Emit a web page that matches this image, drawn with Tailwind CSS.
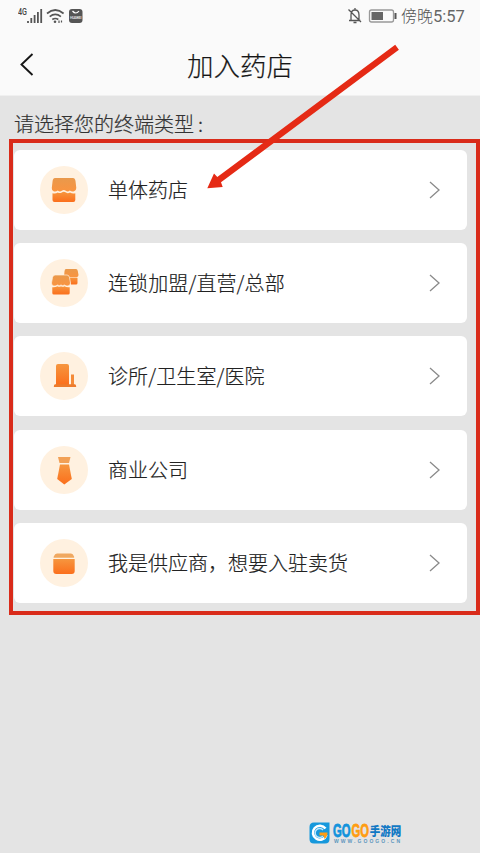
<!DOCTYPE html>
<html lang="zh-CN">
<head>
<meta charset="utf-8">
<title>加入药店</title>
<script src="https://cdn.jsdelivr.net/npm/@tailwindcss/browser@4"></script>
</head>
<body class="relative w-[480px] h-[853px] overflow-hidden bg-[#e4e4e4] font-['Noto_Sans_CJK_SC',sans-serif] font-light text-[#222]">
<svg width="0" height="0" class="absolute">
  <defs>
    <linearGradient id="or" x1="0" y1="0" x2="0" y2="1"><stop offset="0" stop-color="#f6963f"/><stop offset="1" stop-color="#fb6f1c"/></linearGradient>
    <linearGradient id="top" x1="0" y1="0" x2="0" y2="1"><stop offset="0" stop-color="#e9994c"/><stop offset="1" stop-color="#fa9440"/></linearGradient>
  </defs>
</svg>
<header class="h-[96px] bg-[#fafafa] border-b border-[#f0f0f0]">
  <div class="flex h-8 items-center justify-between pl-[18px] pr-[15px]">
    <svg width="68" height="20" viewBox="0 0 68 20" fill="none" stroke="#555">
      <text x="0" y="9" font-size="8.500" font-weight="500" font-family="Roboto, sans-serif" fill="#444" stroke="none" textLength="9" lengthAdjust="spacingAndGlyphs">4G</text>
      <path d="M10 15v2M13.300 12v5M16.600 9v8M19.900 6v11M23.200 3v14" stroke-width="1.800"/>
      <path d="M29 7.500q8.300-7 16.600 0M31.700 10.600q5.600-4.500 11.200 0M34.300 13.500q3-2 6 0" stroke-width="1.700"/>
      <circle cx="37" cy="15.700" r="1.300" fill="#555" stroke="none"/>
      <path d="M41 17v-2.500M43.500 14.500v2" stroke-width="1.200"/>
      <rect x="51" y="3" width="13.500" height="14" rx="3" fill="#555" stroke="none"/>
      <path d="M54.500 5q3.300 4 6.500 0" stroke="#fff" stroke-width="1.200"/>
      <text x="52" y="12.500" font-size="3.500" font-weight="700" font-family="Roboto, sans-serif" fill="#ddd" stroke="none" textLength="11.500">HUAWEI</text>
    </svg>
    <div class="flex items-center">
      <svg width="54" height="18" viewBox="0 0 54 18" fill="none" stroke="#555" stroke-width="1.300">
        <path d="M2 13.500h11.500M4 13V8q0-5 4-5t4 5v5M6.500 15.500h3M8 1v2M1.500 2.500l12.500 12.500"/>
        <rect x="22.500" y="3" width="24" height="12" rx="2" stroke="#999"/>
        <rect x="24.500" y="5" width="11.500" height="8" fill="#666" stroke="none"/>
        <path d="M48.500 6v6" stroke="#555" stroke-width="2"/>
      </svg>
      <span class="flex w-[64px] items-baseline whitespace-nowrap text-[16px] leading-5 text-[#555]"><span>傍晚</span><span class="font-['Roboto',sans-serif] text-[16.500px] font-normal text-[#666]">5:57</span></span>
    </div>
  </div>
  <div class="grid h-[65px] grid-cols-[60px_1fr_60px] items-center">
    <svg class="ml-[18px]" width="18" height="26" viewBox="0 0 18 26" fill="none" stroke="#161616" stroke-width="1.900"><path d="M14.500 2L3.500 12.500l11 10.500"/></svg>
    <h1 class="text-center text-[26.500px] leading-8 font-light text-[#161616] [-webkit-text-stroke:0.2px]">加入药店</h1>
  </div>
</header>
<main class="pl-[14px] pr-[13px]">
  <p class="flex h-[54px] items-center pt-px text-[20px] leading-6 text-[#333] [-webkit-text-stroke:0.2px]">请选择您的终端类型<span class="w-4 pl-1">:</span></p>
  <ul class="flex flex-col gap-[13.200px] text-[20px] [-webkit-text-stroke:0.2px]">
    <li class="flex h-20 items-center rounded-[6px] bg-white pl-[26px] pr-[27px]">
      <svg width="48" height="48" viewBox="0 0 48 48"><circle cx="24" cy="24" r="24" fill="#fff1e0"/>
        <path d="M15 12h18q2 0 2.500 3l.8 7q0 2.500-2.200 3.200-2.400.8-4.300-.8-2 1.800-4 .3-2-1.600-4 0-2 1.500-4-.3-2 1.600-4.200.800Q11.600 24.500 11.800 22l.8-7q.4-3 2.400-3z" fill="url(#top)"/>
        <path d="M12.500 27.200q3 .8 5.300-.8 2 1.300 4 0 2-1.200 4.200.2 2 1.200 4-.2 2.500 1.600 5.300.8V34q0 2-2 2H14.500q-2 0-2-2z" fill="url(#or)"/></svg>
      <span class="ml-5 flex-1">单体药店</span>
      <svg width="12" height="18" viewBox="0 0 12 18" fill="none" stroke="#8a8a8a" stroke-width="1.300"><path d="M2 1l9 8-9 8"/></svg>
    </li>
    <li class="flex h-20 items-center rounded-[6px] bg-white pl-[26px] pr-[27px]">
      <svg width="48" height="48" viewBox="0 0 48 48"><circle cx="24" cy="24" r="24" fill="#fff1e0"/>
        <path d="M26 10h10q1.500 0 1.800 2l.7 4q0 2-2 2.300H24l.5-6q.2-2.300 1.500-2.300z" fill="url(#top)"/>
        <path d="M29 18.800h8.500V24q0 1.500-1.500 1.500h-5z" fill="url(#or)"/>
        <path d="M15 16h12q2 0 2.500 2.500l1 5.500q0 2.600-2.500 3-2 .3-3.500-1-1.700 1.300-3.500 0-1.700 1.300-3.500 0-2 1.300-3.700 1Q11.300 26.500 11.500 24l1-5.500Q13 16 15 16z" fill="url(#top)" stroke="#fff1e0" stroke-width=".7"/>
        <path d="M12.300 28.200q2.700.4 5.200-1 1.800 1.200 3.500 0 1.800 1.200 3.500 0 2 1.400 5.200 1V34q0 1.500-1.500 1.500H13.800q-1.500 0-1.500-1.500z" fill="url(#or)"/></svg>
      <span class="ml-5 flex-1 tracking-[0.1px]">连锁加盟/直营/总部</span>
      <svg width="12" height="18" viewBox="0 0 12 18" fill="none" stroke="#8a8a8a" stroke-width="1.300"><path d="M2 1l9 8-9 8"/></svg>
    </li>
    <li class="flex h-20 items-center rounded-[6px] bg-white pl-[26px] pr-[27px]">
      <svg width="48" height="48" viewBox="0 0 48 48"><circle cx="24" cy="24" r="24" fill="#fff1e0"/>
        <path d="M18 12h9q2 0 2 2v19H16V14q0-2 2-2z" fill="url(#or)"/>
        <rect x="31" y="22.500" width="3" height="11" fill="#f48a38"/>
        <path d="M15 32.300h20q1.200 0 1.200 2.700H13.800q0-2.700 1.200-2.700z" fill="#ed7b2c"/></svg>
      <span class="ml-5 flex-1 tracking-[0.1px]">诊所/卫生室/医院</span>
      <svg width="12" height="18" viewBox="0 0 12 18" fill="none" stroke="#8a8a8a" stroke-width="1.300"><path d="M2 1l9 8-9 8"/></svg>
    </li>
    <li class="flex h-20 items-center rounded-[6px] bg-white pl-[26px] pr-[27px]">
      <svg width="48" height="48" viewBox="0 0 48 48"><circle cx="24" cy="24" r="24" fill="#fff1e0"/>
        <path d="M18 11h12.500L29 17h-9.500z" fill="#f2a055"/>
        <path d="M20 18.500h9l2.800 14.500-7.500 5.500L17.200 33z" fill="url(#or)"/></svg>
      <span class="ml-5 flex-1">商业公司</span>
      <svg width="12" height="18" viewBox="0 0 12 18" fill="none" stroke="#8a8a8a" stroke-width="1.300"><path d="M2 1l9 8-9 8"/></svg>
    </li>
    <li class="flex h-20 items-center rounded-[6px] bg-white pl-[26px] pr-[27px]">
      <svg width="48" height="48" viewBox="0 0 48 48"><circle cx="24" cy="24" r="24" fill="#fff1e0"/>
        <path d="M17 14.500h14q2 0 3 3l.2 1.300H13.500l.3-1.300q1-3 3.200-3z" fill="#f0a860"/>
        <path d="M13.300 20h21.400V32q0 3-3 3H16.300q-3 0-3-3z" fill="url(#or)"/></svg>
      <span class="ml-5 flex-1">我是供应商，想要入驻卖货</span>
      <svg width="12" height="18" viewBox="0 0 12 18" fill="none" stroke="#8a8a8a" stroke-width="1.300"><path d="M2 1l9 8-9 8"/></svg>
    </li>
  </ul>
</main>
<div class="absolute left-[9px] top-[139px] h-[476px] w-[471px] border-4 border-[#d92b1a]"></div>
<svg class="absolute left-0 top-0" width="480" height="200" viewBox="0 0 480 200"><path d="M395.200 44.800L398.900 49.700 221 182.300 222.700 187 207.300 188.200 214 173.500 217.300 177z" fill="#e52a15"/></svg>
<div class="absolute left-[309px] top-[822px] flex items-start">
  <svg width="21" height="22" viewBox="0 0 21 22"><path d="M5 .5h15.500V17q0 4.500-4.500 4.500H5Q.5 21.500.5 17V5Q.5.500 5 .500z" fill="#1698dc"/><path d="M16.500 6.500A7 7 0 1 0 17.500 13" fill="none" stroke="#fff" stroke-width="2.500"/><path d="M14 8A4.500 4.500 0 1 0 14 14" fill="none" stroke="#bde8ff" stroke-width="1.500"/><path d="M10.500 10.500h8q0 4-3 6.500l-1-3.500h-4z" fill="#ff9d12"/></svg>
  <svg class="ml-[3px] overflow-visible" width="70" height="22" viewBox="0 0 70 22" font-family="'Liberation Sans',sans-serif" font-weight="700">
    <text x="0" y="15" font-size="18" fill="#1293dc" stroke="#1293dc" stroke-width=".8" textLength="17.500" lengthAdjust="spacingAndGlyphs">GO</text>
    <text x="18.500" y="15" font-size="18" fill="#ff9d12" stroke="#ff9d12" stroke-width=".8" textLength="17.500" lengthAdjust="spacingAndGlyphs">GO</text>
    <text x="36.800" y="14" font-size="12" font-weight="900" font-family="'Noto Sans CJK SC',sans-serif" fill="#1279c4" textLength="31.500" lengthAdjust="spacingAndGlyphs">手游网</text>
    <text x="1" y="21" font-size="5" fill="#5c96bd" textLength="66">WWW.GOOGO.CN</text>
  </svg>
</div>
</body>
</html>
